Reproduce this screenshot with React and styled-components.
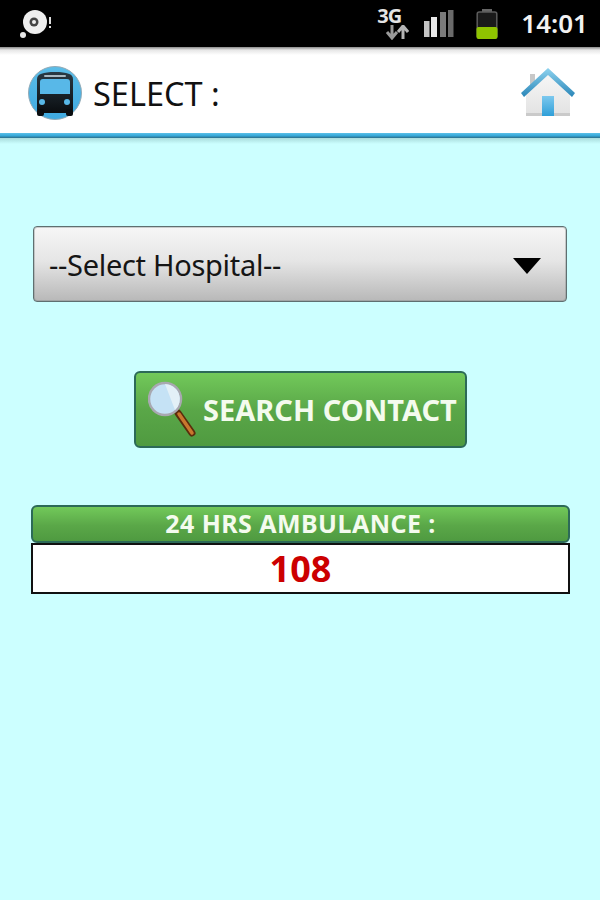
import React from "react";
import styled, { createGlobalStyle } from "styled-components";

const GlobalStyle = createGlobalStyle`
  html, body {
    margin: 0;
    padding: 0;
    background: #ccffff;
  }
  * {
    box-sizing: border-box;
  }
`;

const Screen = styled.div`
  width: 600px;
  height: 900px;
  overflow: hidden;
  display: flex;
  flex-direction: column;
  background: #ccffff;
  font-family: "Noto Sans", "Open Sans", sans-serif;
`;

const StatusBar = styled.div`
  height: 47px;
  flex: none;
  background: #000;
  display: flex;
  align-items: center;
  padding: 0 12px 0 19px;
`;

const StatusRight = styled.div`
  margin-left: auto;
  display: flex;
  align-items: center;
`;

const StatusSlot = styled.div`
  display: flex;
  margin-left: ${(p) => p.$gap}px;
`;

const NetworkStack = styled.div`
  width: 32px;
  display: flex;
  flex-direction: column;
`;

const NetworkLabel = styled.span`
  height: 18px;
  color: #e4e4e4;
  font-size: 20px;
  font-weight: 700;
  line-height: 18px;
  letter-spacing: -1px;
`;

const Clock = styled.div`
  color: #f2f2f2;
  font-size: 26px;
  font-weight: 600;
  line-height: 47px;
  margin-left: 23px;
`;

const Header = styled.div`
  height: 86px;
  flex: none;
  display: flex;
  align-items: center;
  padding: 6px 25px 0 28px;
  background: linear-gradient(#8a8a8a 0, #e6e6e6 3px, #fff 8px);
`;

const HeaderLine = styled.div`
  height: 5px;
  flex: none;
  background: linear-gradient(#5cc0e8 0, #35a8d8 55%, #2c6d88 100%);
`;

const Title = styled.div`
  margin: 2px 0 0 11px;
  font-size: 32.5px;
  line-height: 40px;
  color: #111;
`;

const HomeLink = styled.div`
  margin-left: auto;
  display: flex;
`;

const Content = styled.div`
  flex: 1;
  display: flex;
  flex-direction: column;
  background: linear-gradient(#a9dcdc 0, #ccffff 6px);
  padding: 88px 30px 0 31px;
`;

const SelectBox = styled.div`
  height: 76px;
  margin: 0 3px 0 2px;
  display: flex;
  align-items: center;
  justify-content: space-between;
  padding: 0 25px 0 15px;
  border: 1px solid #5f6f70;
  border-radius: 4px;
  box-shadow: inset 0 0 0 1px rgba(120, 130, 130, 0.35);
  background: linear-gradient(#f6f6f6 0, #e6e6e6 45%, #b8b8b8 100%);
  color: #151515;
  font-size: 29px;
  letter-spacing: -0.3px;
`;

const Arrow = styled.div`
  width: 0;
  height: 0;
  margin-top: 3px;
  border-left: 14px solid transparent;
  border-right: 14px solid transparent;
  border-top: 16px solid #000;
`;

const SearchButton = styled.div`
  width: 333px;
  height: 77px;
  margin: 69px 0 0 103px;
  display: flex;
  align-items: center;
  padding: 0 0 0 12px;
  border: 2px solid #2c6a58;
  border-radius: 6px;
  background: linear-gradient(#72c95a 0, #5aa748 50%, #4f9a40 100%);
  color: #f4fbee;
  font-size: 29px;
  font-weight: 700;
  white-space: nowrap;
`;

const SearchLabel = styled.span`
  margin-left: 3px;
`;

const BarTitle = styled.div`
  height: 38px;
  margin-top: 57px;
  padding-bottom: 2px;
  display: flex;
  align-items: center;
  justify-content: center;
  border: 2px solid #2c6a58;
  border-radius: 6px;
  background: linear-gradient(#72c95a 0, #5aa748 55%, #4f9a40 100%);
  color: #f4fbee;
  font-size: 25px;
  font-weight: 700;
  letter-spacing: 0.45px;
`;

const NumberBox = styled.div`
  height: 51px;
  display: flex;
  align-items: center;
  justify-content: center;
  background: #fff;
  border: 2px solid #111;
  color: #cc0000;
  font-size: 36px;
  font-weight: 700;
`;

function DiscIcon() {
  return (
    <svg width="34" height="32" viewBox="0 0 34 32">
      <circle cx="16" cy="14" r="12" fill="#eee" />
      <circle cx="15" cy="14" r="4.5" fill="#444" />
      <circle cx="15" cy="14" r="2" fill="#eee" />
      <circle cx="4" cy="27" r="3" fill="#e6e6e6" />
      <rect x="30" y="9" width="2" height="7" fill="#ddd" />
      <rect x="30" y="18" width="2" height="2" fill="#ddd" />
    </svg>
  );
}

function NetworkArrows() {
  return (
    <svg width="32" height="15" viewBox="0 0 32 15">
      <g fill="none" stroke="#9a9a9a" strokeWidth="3">
        <path d="M15 0v12M10 7l5 6 5-6" />
      </g>
      <g fill="none" stroke="#b5b5b5" strokeWidth="3">
        <path d="M26 14V2M21 7l5-6 5 6" />
      </g>
    </svg>
  );
}

function SignalIcon() {
  return (
    <svg width="30" height="28" viewBox="0 0 30 28">
      <rect x="0" y="11" width="5.5" height="16" fill="#c4c4c4" />
      <rect x="7" y="7" width="6" height="20" fill="#e8e8e8" />
      <rect x="16" y="2" width="6" height="25" fill="#7a7a7a" />
      <rect x="24" y="0" width="5.5" height="27" fill="#6a6a6a" />
    </svg>
  );
}

function BatteryIcon() {
  return (
    <svg width="22" height="30" viewBox="0 0 22 30">
      <rect x="6" y="0" width="10" height="3" fill="#666" />
      <rect x="1.2" y="3" width="19.6" height="25.8" rx="2" fill="#1a1a1a" stroke="#5c5c5c" strokeWidth="1.5" />
      <rect x="0.5" y="18" width="21" height="12" rx="2" fill="#8fc400" />
    </svg>
  );
}

function BusIcon() {
  return (
    <svg width="54" height="56" viewBox="0 0 54 56">
      <defs>
        <linearGradient id="busDisc" x1="0" y1="0" x2="0" y2="1">
          <stop offset="0" stopColor="#5bbde8" />
          <stop offset="1" stopColor="#3fa9e0" />
        </linearGradient>
        <linearGradient id="busBody" x1="0" y1="0" x2="0" y2="1">
          <stop offset="0" stopColor="#2a3a44" />
          <stop offset="1" stopColor="#0a0d10" />
        </linearGradient>
      </defs>
      <circle cx="27" cy="28" r="26.5" fill="url(#busDisc)" stroke="#93aab6" strokeWidth="1" />
      <path d="M9 14c0-5 6-7 18-7s18 2 18 7v30c0 2-1 4-3 4H12c-2 0-3-2-3-4z" fill="url(#busBody)" />
      <rect x="16" y="10" width="22" height="2" rx="1" fill="#a9b9c2" />
      <path d="M12 17c0-2 1-3 3-3h24c2 0 3 1 3 3v12H12z" fill="#58b8e8" />
      <circle cx="14" cy="37" r="3" fill="#58b8e8" />
      <circle cx="39" cy="37" r="3" fill="#58b8e8" />
      <rect x="9" y="44" width="7" height="7" rx="2" fill="#0a0d10" />
      <rect x="38" y="44" width="7" height="7" rx="2" fill="#0a0d10" />
    </svg>
  );
}

function HomeIcon() {
  return (
    <svg width="54" height="50" viewBox="0 0 54 50">
      <defs>
        <linearGradient id="wall" x1="0" y1="0" x2="0" y2="1">
          <stop offset="0" stopColor="#f8f8f8" />
          <stop offset="1" stopColor="#e2e2e2" />
        </linearGradient>
        <linearGradient id="door" x1="0" y1="0" x2="0" y2="1">
          <stop offset="0" stopColor="#7cc8ee" />
          <stop offset="1" stopColor="#2f9fd8" />
        </linearGradient>
        <linearGradient id="roof" x1="0" y1="0" x2="0" y2="1">
          <stop offset="0" stopColor="#8ed3ef" />
          <stop offset="1" stopColor="#2a86b8" />
        </linearGradient>
      </defs>
      <rect x="9" y="6" width="5" height="14" fill="#c8c8c8" />
      <path d="M5 24L27 3l22 21v24H5z" fill="url(#wall)" />
      <rect x="5" y="45" width="44" height="3" fill="#cacaca" />
      <rect x="21" y="28" width="12" height="20" fill="url(#door)" />
      <path d="M27 0L54 25 51 29 27 7 3 29 0 25z" fill="url(#roof)" />
    </svg>
  );
}

function MagnifierIcon() {
  return (
    <svg width="52" height="60" viewBox="0 0 52 60">
      <path d="M30 33l14 20" stroke="#5b2c0c" strokeWidth="7" strokeLinecap="round" />
      <path d="M31 34l13 19" stroke="#c9772e" strokeWidth="3.5" strokeLinecap="round" />
      <circle cx="17" cy="19" r="16" fill="#c5e2f5" stroke="#a8a8b0" strokeWidth="2.5" />
      <path d="M17 4a15 15 0 0 1 10 26z" fill="#e3f0f7" />
    </svg>
  );
}

export default function App() {
  return (
    <Screen>
      <GlobalStyle />
      <StatusBar>
        <DiscIcon />
        <StatusRight>
          <StatusSlot $gap={0}>
            <NetworkStack>
              <NetworkLabel>3G</NetworkLabel>
              <NetworkArrows />
            </NetworkStack>
          </StatusSlot>
          <StatusSlot $gap={15}>
            <SignalIcon />
          </StatusSlot>
          <StatusSlot $gap={22}>
            <BatteryIcon />
          </StatusSlot>
          <Clock>14:01</Clock>
        </StatusRight>
      </StatusBar>
      <Header>
        <BusIcon />
        <Title>SELECT :</Title>
        <HomeLink>
          <HomeIcon />
        </HomeLink>
      </Header>
      <HeaderLine />
      <Content>
        <SelectBox>
          <span>--Select Hospital--</span>
          <Arrow />
        </SelectBox>
        <SearchButton>
          <MagnifierIcon />
          <SearchLabel>SEARCH CONTACT</SearchLabel>
        </SearchButton>
        <BarTitle>24 HRS AMBULANCE :</BarTitle>
        <NumberBox>108</NumberBox>
      </Content>
    </Screen>
  );
}
